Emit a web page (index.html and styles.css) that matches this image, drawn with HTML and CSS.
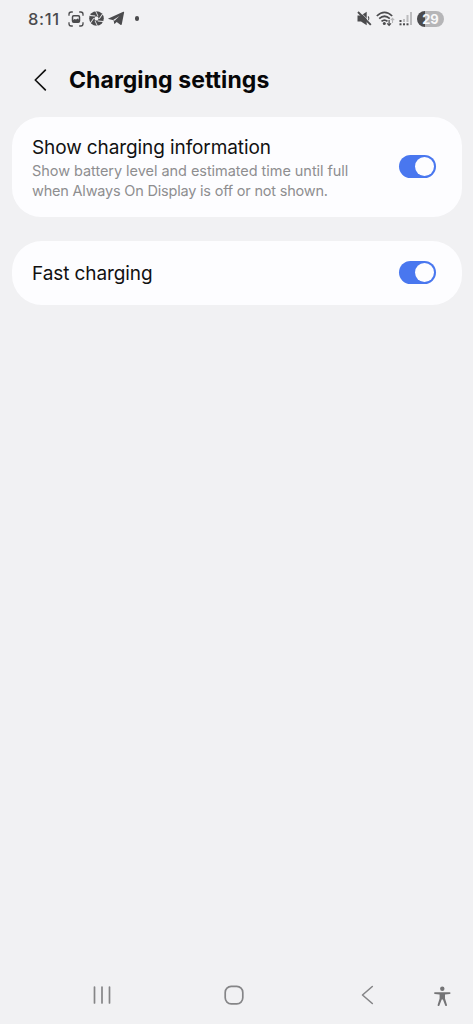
FILE: index.html
```html
<!DOCTYPE html>
<html lang="en">
<head>
<meta charset="utf-8">
<meta name="viewport" content="width=device-width">
<title>Charging settings</title>
<link rel="stylesheet" href="styles.css">
</head>
<body>
<div class="screen">
  <div class="status-bar">
    <span class="time">8:11</span>
    <svg class="capture" width="16" height="16" viewBox="0 0 16 16" fill="none" stroke="#4b4b4d" stroke-width="1.300">
      <path d="M1 4.800V3.200Q1 1 3.200 1h1.600M11.200 1h1.600Q15 1 15 3.200v1.600M15 11.200v1.600q0 2.200-2.200 2.200h-1.600M4.800 15H3.200Q1 15 1 12.800v-1.600"/>
      <rect x="4.500" y="4.700" width="7" height="6.600" rx="1.200" stroke-width="1.500"/>
      <path d="M5 9l1.600-1 1.400.6 1.800-1L11.200 9v2H5z" fill="#4b4b4d" stroke="none"/>
    </svg>
    <svg class="shutter" width="15" height="15" viewBox="0 0 15 15">
      <circle cx="7.500" cy="7.500" r="7.300" fill="#4b4b4d"/>
      <g fill="none" stroke="#f1f1f3" stroke-width=".9">
        <path id="blade" d="M9 5.200L6.600 0"/>
        <use href="#blade" transform="rotate(60 7.500 7.500)"/>
        <use href="#blade" transform="rotate(120 7.500 7.500)"/>
        <use href="#blade" transform="rotate(180 7.500 7.500)"/>
        <use href="#blade" transform="rotate(240 7.500 7.500)"/>
        <use href="#blade" transform="rotate(300 7.500 7.500)"/>
      </g>
      <path d="M6.400 5.500h2.200l1.200 2-1.200 2H6.400l-1.200-2z" fill="#f1f1f3"/>
    </svg>
    <svg class="plane" width="17" height="15" viewBox="0 0 17 15">
      <path d="M.4 7.400L15.300.8q1-.4.800.7l-2.300 11.800q-.3 1.200-1.400.4L8.700 11l-1.900 1.800q-.5.400-.6-.3L5.600 9.200.5 8q-.6-.3-.1-.6z" fill="#4b4b4d"/>
      <path d="M5.200 8.900l6.300-4-4.900 4.900z" fill="#f1f1f3"/>
    </svg>
    <span class="dot"></span>
    <div class="status-right">
      <svg class="mute" width="15" height="15" viewBox="0 0 15 15">
        <path d="M.5 4.600h3.500L9.700.8v13.400L4 10.400H.5z" fill="#4b4b4d"/>
        <path d="M11.200 5.400q1.300 1.900.2 4" fill="none" stroke="#4b4b4d" stroke-width="1.100"/>
        <path d="M3.100.9l11.500 11.500" stroke="#f1f1f3" stroke-width=".7"/>
        <path d="M1 1l12.800 12.800" stroke="#4b4b4d" stroke-width="1.900"/>
      </svg>
      <svg class="wifi" width="19" height="16" viewBox="0 0 19 16" fill="none" stroke="#4b4b4d" stroke-width="1.700">
        <path d="M.8 5Q8.500-2.200 16.200 5M3.200 7.700q5.300-4.900 10.600 0M5.500 10.400q3-2.700 6 0"/>
        <circle cx="8.300" cy="12.600" r="1.500" fill="#4b4b4d" stroke="none"/>
        <path d="M13.100 9v5M11.200 12.300l1.900 2 1.900-2" stroke-width="1.200"/>
        <path d="M16.500 12V7.500M14.800 9.200l1.700-1.800 1.700 1.800" stroke="#b7b7b9" stroke-width="1.100"/>
      </svg>
      <svg class="signal" width="14" height="15" viewBox="0 0 14 15">
        <g fill="#bcbcbe"><rect x="4" y="8" width="2" height="3"/><rect x="7.500" y="4" width="2" height="7"/><rect x="11" y="1" width="2" height="13"/></g>
        <g fill="#4b4b4d"><rect x=".5" y="9" width="2" height="2"/><rect x=".5" y="12.300" width="2" height="2"/><rect x="4" y="12.300" width="2" height="2"/><rect x="7.500" y="12.300" width="2" height="2"/></g>
      </svg>
      <span class="battery">29</span>
    </div>
  </div>
  <header class="header">
    <svg width="13" height="22" viewBox="0 0 13 22" fill="none" stroke="#111" stroke-width="1.700" stroke-linecap="round" stroke-linejoin="round"><path d="M11.300 1.200L1.300 11l10 9.800"/></svg>
    <h1>Charging settings</h1>
  </header>
  <main class="settings">
    <section class="card card-info">
      <div>
        <h2 class="name">Show charging information</h2>
        <p class="detail"><span class="line-one">Show battery level and estimated time until full</span><br><span class="line-two">when Always On Display is off or not shown.</span></p>
      </div>
      <span class="toggle" role="switch" aria-checked="true"></span>
    </section>
    <section class="card card-fast">
      <h2 class="name">Fast charging</h2>
      <span class="toggle" role="switch" aria-checked="true"></span>
    </section>
  </main>
  <nav class="nav-bar">
    <svg class="recents" width="19" height="20" viewBox="0 0 19 20" stroke="#858587" stroke-width="1.700" stroke-linecap="round"><path d="M1.500 2v16M9 2v16M16.500 2v16"/></svg>
    <svg class="home" width="20" height="20" viewBox="0 0 20 20" fill="none" stroke="#858587" stroke-width="1.700"><rect x="1.200" y="1.400" width="17.600" height="17.400" rx="6"/></svg>
    <svg class="back" width="13" height="20" viewBox="0 0 13 20" fill="none" stroke="#858587" stroke-width="1.600" stroke-linecap="round" stroke-linejoin="round"><path d="M11.300 1.500L1.500 10l9.800 8.500"/></svg>
    <svg class="access" width="17" height="21" viewBox="0 0 17 21" fill="#747476"><circle cx="8.300" cy="2.800" r="2.200"/><path d="M.9 6.200h14.800q.8 0 .8.900t-.8.900L11 8.500v4l2 6.500q.1.900-.7 1.100-.8.100-1.100-.7l-2.300-5.800H7.700l-2.300 5.800q-.3.800-1.100.7-.8-.2-.7-1.100l2-6.500v-4L.9 8q-.8 0-.8-.9t.8-.9z"/></svg>
  </nav>
</div>
</body>
</html>
```
FILE: styles.css
```css
* { box-sizing: border-box; }
body {
  margin: 0;
  background: #f1f1f3;
  color: #111;
  font-family: Inter, "Liberation Sans", sans-serif;
}
h1, h2, p { margin: 0; white-space: nowrap; }
svg { flex: none; display: block; }
.screen { width: 473px; height: 1024px; display: flex; flex-direction: column; }

.status-bar { height: 37px; padding: 0 29px 0 28px; display: flex; align-items: center; }
.time { width: 34px; margin-right: 5.500px; color: #4b4b4d; font-size: 16.500px; font-weight: 500; letter-spacing: 0.700px; white-space: nowrap; }
.shutter { margin-left: 5px; }
.plane { margin-left: 4.500px; }
.dot { width: 4.500px; height: 4.500px; margin-left: 9.500px; border-radius: 50%; background: #4b4b4d; }
.status-right { margin-left: auto; display: flex; align-items: center; }
.wifi { margin-left: 4px; }
.signal { margin-left: 4px; }
.battery {
  width: 27px; height: 16px; margin-left: 4.500px;
  border-radius: 8px;
  background: linear-gradient(90deg, #4b4b4d 29%, #b5b5b7 29%);
  color: #f8f8f9; font-size: 13px; font-weight: 700; line-height: 16px; text-align: center;
}

.header { height: 79.500px; padding: 0 0 0 34px; display: flex; align-items: center; }
.header svg { margin-top: 6px; }
.header h1 { margin: 7px 0 0 22px; font-size: 23px; line-height: 32px; font-weight: 700; color: #070708; letter-spacing: 0.070px; }

.settings { padding: 0 11.500px 0 12px; display: grid; gap: 24px; }
.card { display: flex; align-items: center; justify-content: space-between; padding: 0 25.500px 0 20px; background: #fdfdff; }
.card-info { height: 100px; border-radius: 29px; }
.card-fast { height: 64px; border-radius: 30px; }
.card-info > div, .card-fast > h2 { padding-top: 2px; }
.name { font-size: 19px; line-height: 26px; font-weight: 400; letter-spacing: -0.100px; }
.detail { color: #8e8e90; font-size: 14.500px; line-height: 20px; }
.line-one { letter-spacing: -0.050px; }
.line-two { letter-spacing: -0.200px; }
.toggle { flex: none; width: 37px; height: 23px; padding: 2px; border-radius: 12px; background: #4977ef; display: flex; justify-content: flex-end; }
.toggle::after { content: ""; width: 19px; height: 19px; border-radius: 50%; background: #fdfdff; }

.nav-bar { margin-top: auto; height: 58px; padding: 0 22px 0 92.500px; display: flex; align-items: center; }
.home { margin-left: 112.500px; }
.back { margin-left: 117px; }
.access { margin-left: 60px; margin-top: 3px; }
```
